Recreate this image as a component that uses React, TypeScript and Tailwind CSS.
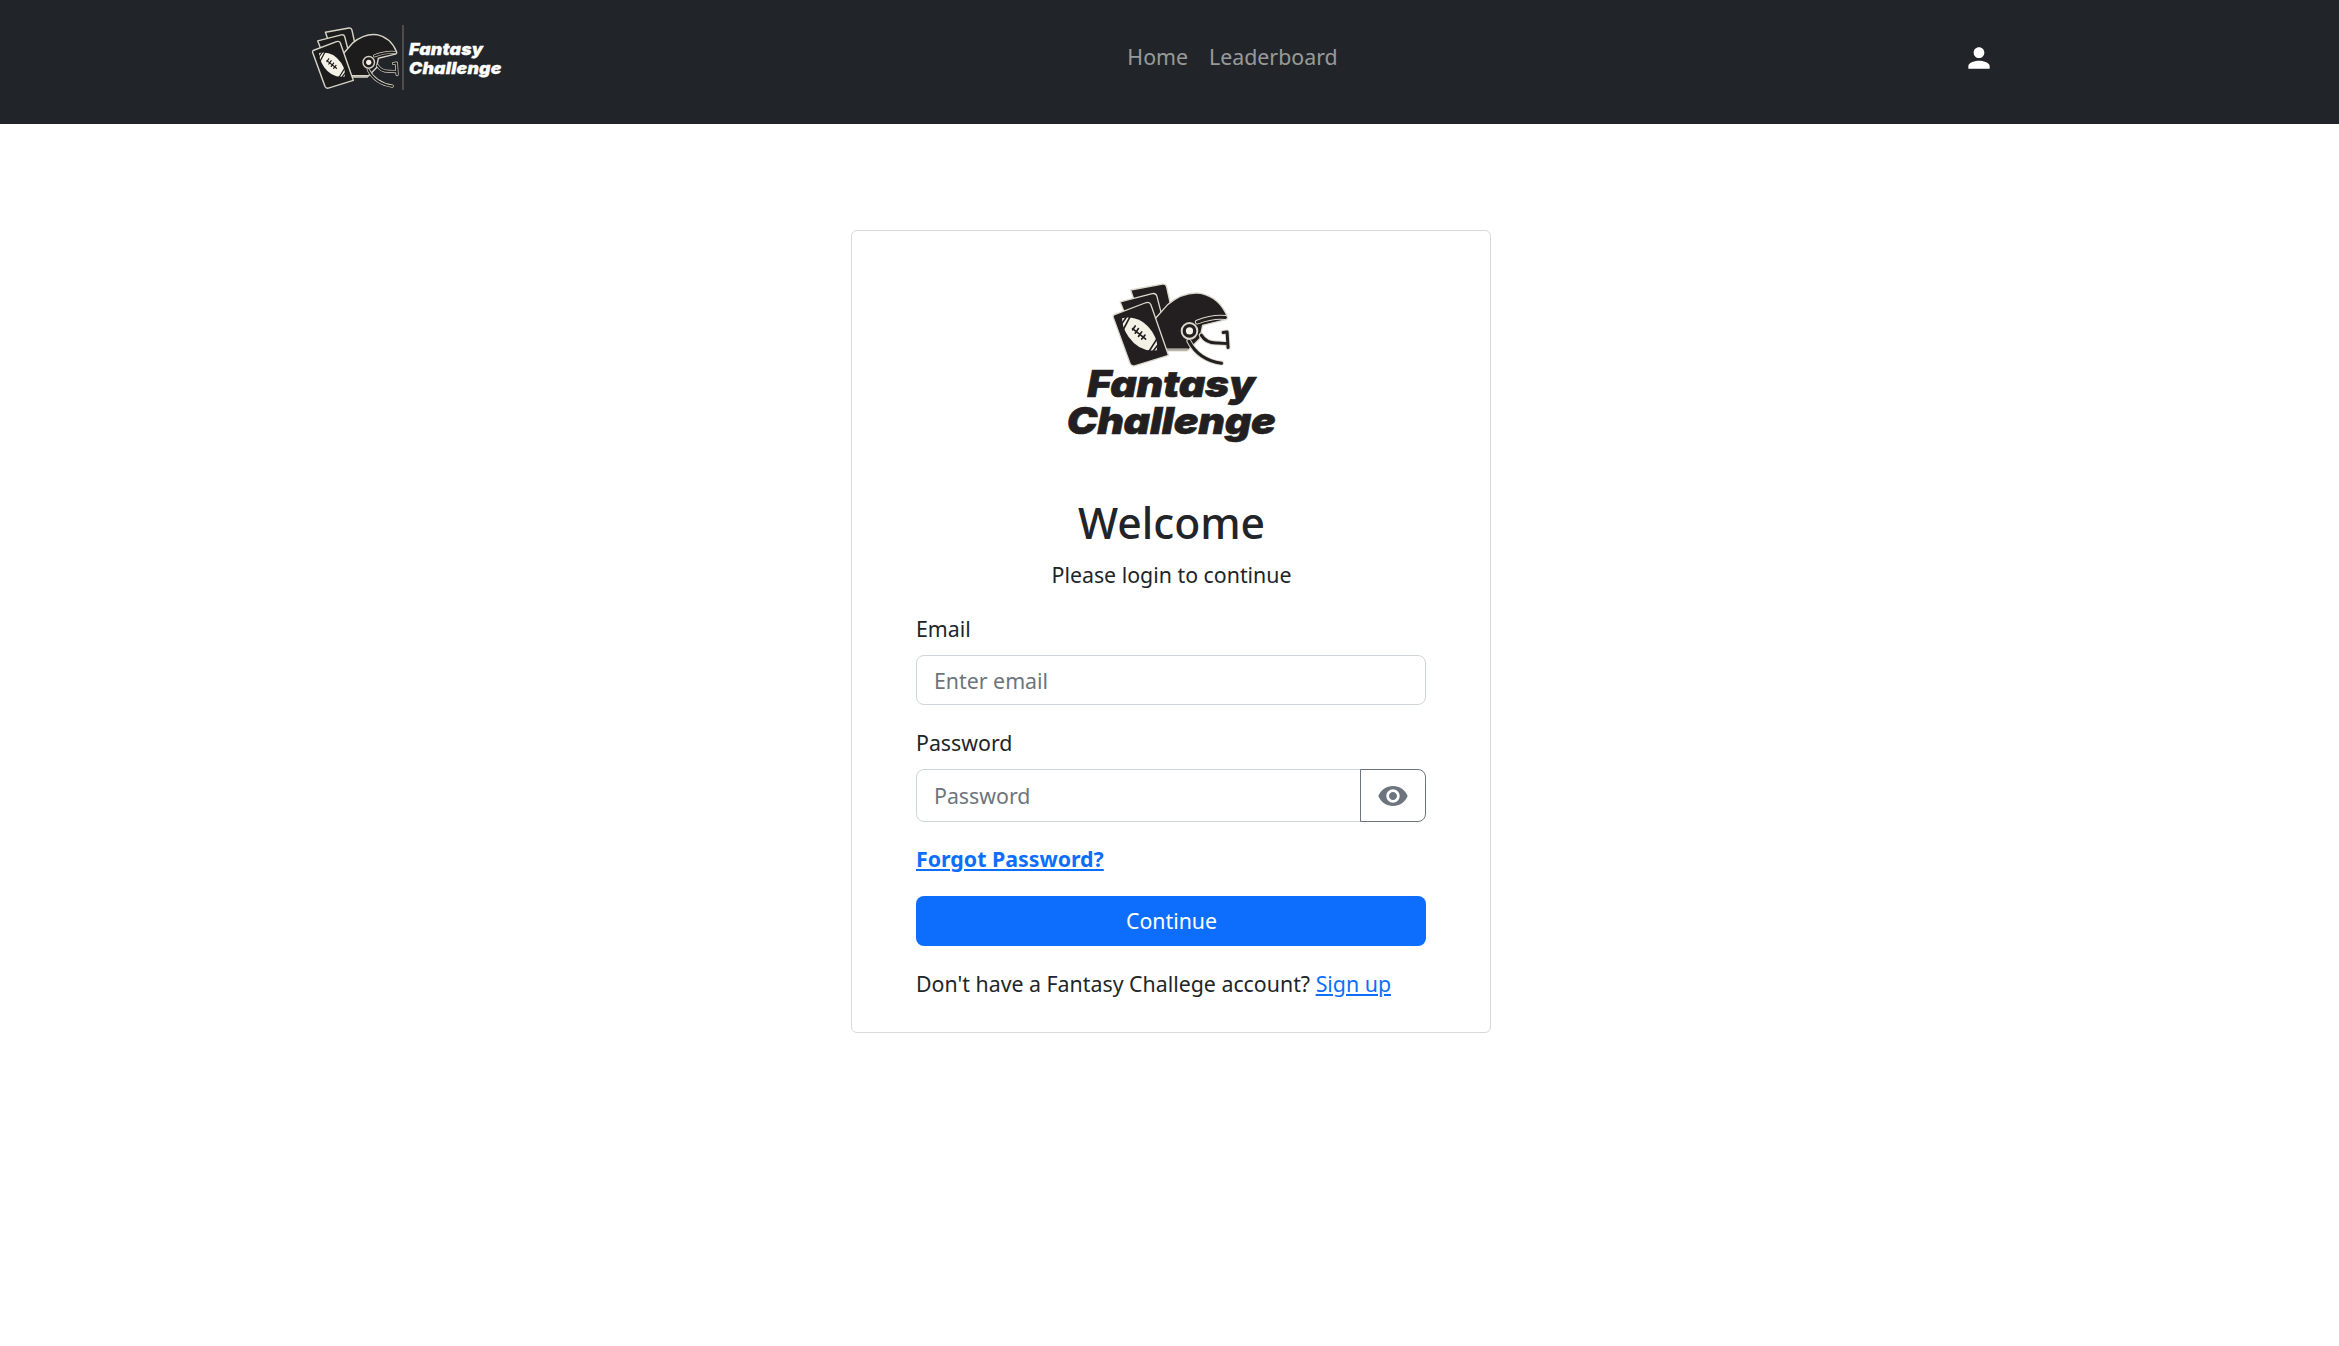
import React from "react";
import { MdPerson, MdVisibility } from "react-icons/md";

function Bar({ d, outline, ink, o, i }: { d: string; outline: string; ink: string; o: number; i: number }) {
  return (
    <>
      <path d={d} stroke={outline} strokeWidth={o} />
      <path d={d} stroke={ink} strokeWidth={i} />
    </>
  );
}

function Mark({ className, outline, ink, cream, sw, o, i }: { className: string; outline: string; ink: string; cream: string; sw: number; o: number; i: number }) {
  return (
    <svg viewBox="210 38 370 262" className={className} fill="none" strokeLinejoin="round" strokeLinecap="round" aria-hidden="true">
      <path d="M270 62 L368 44 Q378 43 380 52 L396 125 L300 150 Z" fill={ink} stroke={outline} strokeWidth={sw} />
      <path d="M238 98 L336 73 Q347 71 350 80 L372 165 L270 180 Z" fill={ink} stroke={outline} strokeWidth={sw} />
      <path d="M384 106 Q432 66 484 72 Q542 84 566 144 Q568 152 556 154 L490 170 L482 210 L444 248 L376 248 L345 150 Z" fill={ink} stroke={outline} strokeWidth={sw} />
      <path d="M219 138 L316 101 Q328 97 332 107 L386 262 L282 294 Q272 296 268 286 L217 146 Q215 140 219 138 Z" fill={ink} stroke={outline} strokeWidth={sw} />
      <path d="M244 148 Q300 138 336 190 Q356 222 350 246 Q298 254 264 206 Q242 172 244 148 Z" fill={cream} />
      <path d="M256 146 L238 172 M268 144 L248 182 M338 250 L356 226 M326 250 L350 212" stroke={ink} strokeWidth={5} />
      <path d="M276 180 L316 212 M284 172 L276 184 M294 180 L284 194 M304 190 L294 204 M314 200 L304 212" stroke={ink} strokeWidth={5} />
      <path d="M380 243 L444 243" stroke={outline} strokeWidth={sw} />
      <Bar d="M474 160 Q520 142 560 146" outline={outline} ink={ink} o={o} i={i} />
      <Bar d="M486 200 Q502 226 536 224 L566 226 M553 192 L565 190 L568 238" outline={outline} ink={ink} o={o} i={i} />
      <Bar d="M448 218 Q478 276 548 286" outline={outline} ink={ink} o={o} i={i} />
      <circle cx="450" cy="187" r="24" fill={ink} stroke={outline} strokeWidth={o - i} />
      <circle cx="450" cy="187" r="11" fill={cream} />
    </svg>
  );
}

export default function App() {
  return (
    <div className="min-h-[1346px] bg-white font-['Noto_Sans','Liberation_Sans',sans-serif] text-[21.33px] leading-[32px] text-[#212529]">
      <header className="h-[124px] bg-[#212529]">
        <div className="ml-[311px] flex h-[115px] w-[1684px] items-center justify-between">
          <a className="flex h-[66px] w-[191px] items-center">
            <Mark className="h-[64px] w-[89px] shrink-0" outline="#d6d2c6" ink="#1c1c1c" cream="#f4f1e6" sw={6} o={13} i={7} />
            <span className="ml-[2px] h-[65px] w-[2px] shrink-0 bg-[#4a4c4e]" />
            <span className="ml-[5px] mt-[3px] flex origin-left scale-x-[1.07] flex-col font-['Inter',sans-serif] text-[16.5px] font-black italic leading-[19.5px] tracking-[0.2px] text-white [-webkit-text-stroke:0.3px_#ffffff]">
              <span>Fantasy</span>
              <span>Challenge</span>
            </span>
          </a>
          <nav className="mb-[1px] flex gap-[21px] text-[rgba(255,255,255,0.55)]">
            <a>Home</a>
            <a>Leaderboard</a>
          </nav>
          <div className="flex w-[32px] justify-end text-white">
            <MdPerson size={32} />
          </div>
        </div>
      </header>

      <main className="flex justify-center pl-[3px] pt-[106px]">
        <div className="w-[640px] rounded-[6px] border border-[#d9d9da] bg-white px-[64px] pb-[32px] pt-[51px]">
          <div className="flex flex-col items-center">
            <Mark className="h-[86px] w-[121px]" outline="#dcd8cc" ink="#231f20" cream="#f4f1e6" sw={4} o={15} i={9} />
            <div className="-mt-[3px] flex scale-x-[1.11] flex-col items-center font-['Inter',sans-serif] text-[37px] font-black italic leading-[37px] tracking-[-0.2px] text-[#231f20] [-webkit-text-stroke:0.6px_#231f20]">
              <span>Fantasy</span>
              <span>Challenge</span>
            </div>
          </div>
          <h2 className="ml-[1px] mt-[58px] text-center text-[42.67px] font-medium leading-[51px]">Welcome</h2>
          <p className="ml-[1px] mt-[11px] text-center">Please login to continue</p>
          <form className="mt-[22px]">
            <label className="block">Email</label>
            <input
              placeholder="Enter email"
              className="mt-[10px] block h-[50px] w-full rounded-[8px] border border-[#ced4da] px-[17px] text-[21.33px] outline-none placeholder:text-[#6c757d]"
            />
            <label className="mt-[22px] block">Password</label>
            <div className="mt-[10px] flex h-[53px]">
              <input
                placeholder="Password"
                className="min-w-0 flex-1 rounded-l-[8px] border border-[#ced4da] px-[17px] text-[21.33px] outline-none placeholder:text-[#6c757d]"
              />
              <button type="button" className="-ml-px flex w-[66px] items-center justify-center rounded-r-[8px] border border-[#6c757d] text-[#6c757d]">
                <MdVisibility size={32} />
              </button>
            </div>
            <a className="mt-[21px] block font-bold text-[#0d6efd] underline">Forgot Password?</a>
            <button type="button" className="mt-[21px] block h-[50px] w-full rounded-[8px] bg-[#0d6efd] pl-[1px] text-white">Continue</button>
            <p className="mt-[22px]">
              Don't have a Fantasy Challege account? <a className="text-[#0d6efd] underline">Sign up</a>
            </p>
          </form>
        </div>
      </main>
    </div>
  );
}
